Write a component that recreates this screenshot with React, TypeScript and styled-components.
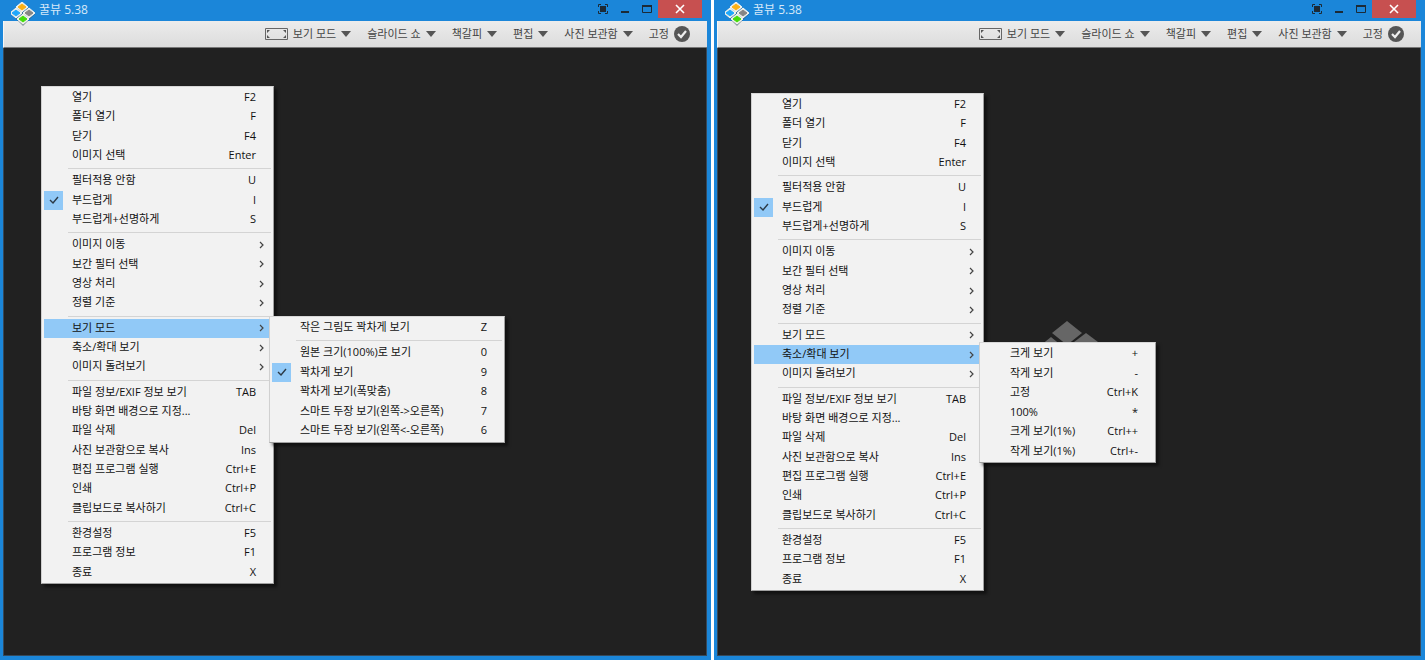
import React from "react";
import styled, { createGlobalStyle, css } from "styled-components";

const GlobalStyle = createGlobalStyle`
  * { box-sizing: border-box; }
  html, body, #root { height: 100%; }
  body {
    margin: 0;
    background: #fff;
    font-family: "Open Sans", "Noto Sans CJK KR", sans-serif;
    font-size: 11px;
  }
  button {
    border: 0;
    padding: 0;
    margin: 0;
    background: none;
    font: inherit;
    color: inherit;
    cursor: default;
  }
`;

const Desktop = styled.main`
  display: grid;
  grid-template-columns: 1fr 1fr;
  gap: 3px;
  min-height: 100%;
`;

const Window = styled.section`
  display: flex;
  flex-direction: column;
  min-width: 0;
  padding: 0 4px 4px 3px;
  background: #1b86d9;
`;

const TitleBar = styled.header`
  display: flex;
  justify-content: space-between;
  height: 21px;
  padding: 0 5px 0 8px;
`;

const Brand = styled.h1`
  display: flex;
  align-items: flex-start;
  gap: 4px;
  margin: 0;
  color: #d5e8f8;
  font-size: 12px;
  font-weight: 400;
  line-height: 20px;
`;

const BrandLogo = styled.svg`
  position: relative;
  z-index: 1;
  flex: none;
  margin-top: 2px;
`;

const WindowControls = styled.div`
  display: flex;
  height: 18px;
`;

const ControlButton = styled.button<{ $close?: boolean }>`
  display: grid;
  place-items: center;
  width: ${(p) => (p.$close ? 44 : 22)}px;
  background: ${(p) => (p.$close ? "#c75050" : "transparent")};
`;

const Toolbar = styled.nav`
  display: flex;
  align-items: center;
  justify-content: flex-end;
  gap: 16px;
  height: 27px;
  padding-right: 17px;
  background: linear-gradient(#ececec, #dcdcdc);
  border-left: 1px solid #f6f6f6;
  border-bottom: 1px solid #777;
  color: #444;
`;

const ToolButton = styled.button`
  display: flex;
  align-items: center;
  gap: 5px;
  line-height: 20px;
  white-space: nowrap;
`;

const Canvas = styled.div`
  position: relative;
  flex: 1;
  background: #212121;
  border: solid #36495a;
  border-width: 0 1px 1px 1px;
`;

const Watermark = styled.svg`
  position: absolute;
  left: calc(50% - 38px);
  top: calc(50% - 31px);
`;

const menuPanel = css<{ $width: number }>`
  display: flex;
  flex-direction: column;
  width: ${(p) => p.$width}px;
  margin: 0;
  padding: 1px 2px;
  list-style: none;
  background: #f2f2f2;
  border: 1px solid;
  border-color: #d8d8d8 #a0a0a0 #a0a0a0 #d0d0d0;
  box-shadow: 3px 3px 3px rgba(0, 0, 0, 0.5);
`;

const ContextMenu = styled.ul<{ $width: number; $x: number; $y: number }>`
  ${menuPanel}
  position: absolute;
  left: ${(p) => p.$x}px;
  top: ${(p) => p.$y}px;
  height: 498px;
`;

const SubMenu = styled.ul<{ $width: number; $height: number }>`
  ${menuPanel}
  position: absolute;
  z-index: 2;
  left: calc(100% - 2px);
  top: -3px;
  height: ${(p) => p.$height}px;
`;

const MenuRow = styled.li`
  position: relative;
  display: flex;
  flex: 1 1 19px;
`;

const MenuButton = styled.button<{ $open?: boolean }>`
  display: grid;
  flex: 1;
  grid-template-columns: 28px 1fr auto 15px;
  align-items: center;
  background: ${(p) => (p.$open ? "#91c9f7" : "transparent")};
  color: #111;
  line-height: 19px;
  text-align: left;
  white-space: nowrap;
`;

const MenuText = styled.span`
  height: 19px;
  line-height: 18px;
`;

const CheckSlot = styled.span<{ $checked?: boolean }>`
  display: grid;
  place-items: center;
  width: 19px;
  height: 19px;
  background: ${(p) => (p.$checked ? "#91c9f7" : "transparent")};
`;

const ArrowSlot = styled.span`
  display: flex;
  padding-left: 3px;
`;

const Separator = styled.li`
  flex: none;
  height: 1px;
  margin: 3px 0 2px 24px;
  background: #d4d4d4;
`;

type Item = {
  label: string;
  keys?: string;
  checked?: boolean;
  arrow?: boolean;
};
type Entry = Item | "-";
type SubSpec = { owner: string; width: number; height: number; entries: Entry[] };

const mainEntries: Entry[] = [
  { label: "열기", keys: "F2" },
  { label: "폴더 열기", keys: "F" },
  { label: "닫기", keys: "F4" },
  { label: "이미지 선택", keys: "Enter" },
  "-",
  { label: "필터적용 안함", keys: "U" },
  { label: "부드럽게", keys: "I", checked: true },
  { label: "부드럽게+선명하게", keys: "S" },
  "-",
  { label: "이미지 이동", arrow: true },
  { label: "보간 필터 선택", arrow: true },
  { label: "영상 처리", arrow: true },
  { label: "정렬 기준", arrow: true },
  "-",
  { label: "보기 모드", arrow: true },
  { label: "축소/확대 보기", arrow: true },
  { label: "이미지 돌려보기", arrow: true },
  "-",
  { label: "파일 정보/EXIF 정보 보기", keys: "TAB" },
  { label: "바탕 화면 배경으로 지정..." },
  { label: "파일 삭제", keys: "Del" },
  { label: "사진 보관함으로 복사", keys: "Ins" },
  { label: "편집 프로그램 실행", keys: "Ctrl+E" },
  { label: "인쇄", keys: "Ctrl+P" },
  { label: "클립보드로 복사하기", keys: "Ctrl+C" },
  "-",
  { label: "환경설정", keys: "F5" },
  { label: "프로그램 정보", keys: "F1" },
  { label: "종료", keys: "X" },
];

const viewModeMenu: SubSpec = {
  owner: "보기 모드",
  width: 236,
  height: 127,
  entries: [
    { label: "작은 그림도 꽉차게 보기", keys: "Z" },
    "-",
    { label: "원본 크기(100%)로 보기", keys: "0" },
    { label: "꽉차게 보기", keys: "9", checked: true },
    { label: "꽉차게 보기(폭맞춤)", keys: "8" },
    { label: "스마트 두장 보기(왼쪽->오른쪽)", keys: "7" },
    { label: "스마트 두장 보기(왼쪽<-오른쪽)", keys: "6" },
  ],
};

const zoomMenu: SubSpec = {
  owner: "축소/확대 보기",
  width: 177,
  height: 121,
  entries: [
    { label: "크게 보기", keys: "+" },
    { label: "작게 보기", keys: "-" },
    { label: "고정", keys: "Ctrl+K" },
    { label: "100%", keys: "*" },
    { label: "크게 보기(1%)", keys: "Ctrl++" },
    { label: "작게 보기(1%)", keys: "Ctrl+-" },
  ],
};

const diamond = (cx: number, cy: number, rx: number, ry: number) =>
  `${cx},${cy - ry} ${cx + rx},${cy} ${cx},${cy + ry} ${cx - rx},${cy}`;

function Logo() {
  const tiles: [number, number, string][] = [
    [11, 5, "#fbb116"],
    [5, 11, "#1ea7fb"],
    [18, 11, "#858585"],
    [12, 17, "#45dc0c"],
  ];
  return (
    <BrandLogo width="24" height="24" viewBox="0 0 24 24" aria-hidden="true">
      <polygon points="11,1 24,12 12,24 0,12" fill="#3a5468" opacity="0.55" />
      {tiles.map(([x, y, fill]) => (
        <g key={fill}>
          <polygon points={diamond(x, y, 6, 5)} fill="#f4f4ee" stroke="#f4f4ee" strokeLinejoin="round" />
          <polygon points={diamond(x, y, 4, 3)} fill={fill} stroke={fill} strokeWidth="1" />
        </g>
      ))}
    </BrandLogo>
  );
}

function WatermarkLogo() {
  return (
    <Watermark width="72" height="64" viewBox="0 0 72 64" aria-hidden="true">
      <g fill="#666">
        <polygon points={diamond(36, 12, 15, 12)} />
        <polygon points={diamond(20, 29, 16, 13)} />
        <polygon points={diamond(55, 24, 16, 12)} />
        <polygon points={diamond(38, 42, 18, 15)} />
      </g>
    </Watermark>
  );
}

const DownArrow = () => (
  <svg width="10" height="6" viewBox="0 0 10 6" aria-hidden="true">
    <path d="M0 0h10L5 6z" fill="#555" />
  </svg>
);

const CheckMark = () => (
  <svg width="10" height="8" viewBox="0 0 10 8" aria-hidden="true">
    <path d="M1 4l3 3 5-6" fill="none" stroke="#2c3a46" strokeWidth="1.4" />
  </svg>
);

const Chevron = () => (
  <svg width="6" height="8" viewBox="0 0 6 8" aria-hidden="true">
    <path d="M1 1l3 3-3 3" fill="none" stroke="#444" strokeWidth="1.2" />
  </svg>
);

function Entries({ entries, sub }: { entries: Entry[]; sub?: SubSpec }) {
  return (
    <>
      {entries.map((entry, i) => {
        if (entry === "-") return <Separator key={i} role="separator" />;
        const open = sub?.owner === entry.label;
        return (
          <MenuRow key={i} role="none">
            <MenuButton
              type="button"
              role={entry.checked ? "menuitemcheckbox" : "menuitem"}
              aria-checked={entry.checked}
              aria-haspopup={entry.arrow ? "menu" : undefined}
              aria-expanded={entry.arrow ? open : undefined}
              $open={open}
            >
              <CheckSlot $checked={entry.checked}>{entry.checked && <CheckMark />}</CheckSlot>
              <MenuText>{entry.label}</MenuText>
              <MenuText>{entry.keys}</MenuText>
              <ArrowSlot>{entry.arrow && <Chevron />}</ArrowSlot>
            </MenuButton>
            {open && sub && (
              <SubMenu role="menu" aria-label={sub.owner} $width={sub.width} $height={sub.height}>
                <Entries entries={sub.entries} />
              </SubMenu>
            )}
          </MenuRow>
        );
      })}
    </>
  );
}

function ViewerWindow({ x, y, sub }: { x: number; y: number; sub: SubSpec }) {
  return (
    <Window>
      <TitleBar>
        <Brand>
          <Logo />
          꿀뷰 5.38
        </Brand>
        <WindowControls>
          <ControlButton type="button" aria-label="전체 화면">
            <svg width="10" height="10" viewBox="0 0 10 10">
              <path d="M.5 3V.5H3M7 .5h2.5V3M9.5 7v2.5H7M3 9.5H.5V7" fill="none" stroke="#1c2a36" />
              <path d="M2 2h6v6H2z" fill="#1c2a36" />
            </svg>
          </ControlButton>
          <ControlButton type="button" aria-label="최소화">
            <svg width="8" height="10" viewBox="0 0 8 10">
              <path d="M0 7h8v2H0z" fill="#1c2a36" />
            </svg>
          </ControlButton>
          <ControlButton type="button" aria-label="최대화">
            <svg width="10" height="8" viewBox="0 0 10 8">
              <path d="M.5 1v6.5h9V1" fill="none" stroke="#1c2a36" />
              <path d="M0 0h10v2H0z" fill="#1c2a36" />
            </svg>
          </ControlButton>
          <ControlButton type="button" aria-label="닫기" $close>
            <svg width="10" height="10" viewBox="0 0 10 10">
              <path d="M1 1l8 8M9 1L1 9" stroke="#fff" strokeWidth="1.6" />
            </svg>
          </ControlButton>
        </WindowControls>
      </TitleBar>
      <Toolbar>
        <ToolButton type="button">
          <svg width="23" height="12" viewBox="0 0 23 12" aria-hidden="true">
            <path d="M.5.5h22v11H.5z" fill="none" stroke="#666" />
            <path
              d="M2 2h3L2 5zM21 2v3l-3-3zM2 10V7l3 3zM21 10h-3l3-3z"
              fill="#555"
            />
          </svg>
          보기 모드
          <DownArrow />
        </ToolButton>
        {["슬라이드 쇼", "책갈피", "편집", "사진 보관함"].map((label) => (
          <ToolButton type="button" key={label}>
            {label}
            <DownArrow />
          </ToolButton>
        ))}
        <ToolButton type="button" aria-pressed="true">
          고정
          <svg width="16" height="16" viewBox="0 0 16 16" aria-hidden="true">
            <circle cx="8" cy="8" r="8" fill="#555" />
            <path d="M4 8l3 3 5-6" fill="none" stroke="#eee" strokeWidth="2.2" />
          </svg>
        </ToolButton>
      </Toolbar>
      <Canvas>
        <WatermarkLogo />
        <ContextMenu role="menu" aria-label="꿀뷰" $width={233} $x={x} $y={y}>
          <Entries entries={mainEntries} sub={sub} />
        </ContextMenu>
      </Canvas>
    </Window>
  );
}

export default function App() {
  return (
    <>
      <GlobalStyle />
      <Desktop>
        <ViewerWindow x={37} y={38} sub={viewModeMenu} />
        <ViewerWindow x={33} y={45} sub={zoomMenu} />
      </Desktop>
    </>
  );
}
